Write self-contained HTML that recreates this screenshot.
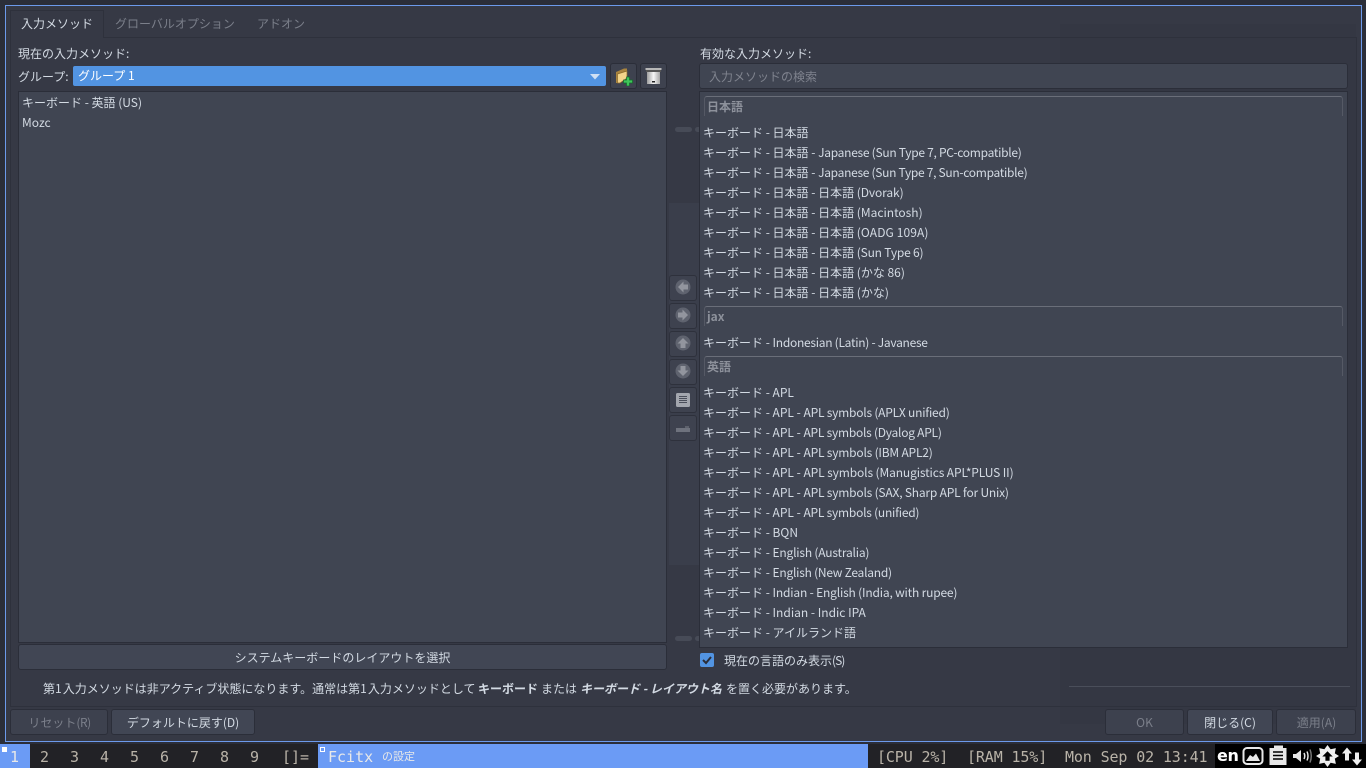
<!DOCTYPE html>
<html lang="ja"><head><meta charset="utf-8"><title>Fcitx の設定</title>
<style>
html,body{margin:0;padding:0;width:1366px;height:768px;overflow:hidden;background:#2b2e39}
body{position:relative;font:12px/16px "Noto Sans CJK JP","Liberation Sans",sans-serif;color:#d3dae3}
div,span,svg{position:absolute;box-sizing:border-box}
em{font-style:normal}
.t{white-space:nowrap;line-height:16px}
.r{left:703px;white-space:nowrap;line-height:16px}
.box{background:#404552;border:1px solid #2b2e39}
.btn{background:#414654;border:1px solid #2b2e39;border-radius:3px;text-align:center;white-space:nowrap;line-height:24px;padding-top:1px}
.dis{background:#3d414e;color:#7b7f8a}
.sec{left:704px;width:639px;height:20px;border:1px solid #6a6e79;border-bottom:0;border-radius:3px 3px 0 0;border-right-color:#555965;border-left-color:#555965}
.sh{left:707px;font-weight:bold;color:#8d919b;white-space:nowrap;line-height:16px}
.side{left:669px;width:28px;height:26px;background:#3e424f;border:1px solid #2e313c;border-radius:3px}
.m{font:15px/24px "DejaVu Sans Mono",monospace;color:#b9b3a8;white-space:pre;top:745px}
.ms{letter-spacing:-.13px}
.ic{top:744px;height:24px;background:#000}
</style></head><body>
<div style="left:5px;top:5px;width:1357px;height:737px;background:#363945;border:1px solid #6c9aec"></div>
<div style="left:1060px;top:24px;width:296px;height:700px;background:#343743"></div>
<div style="left:669px;top:203px;width:30px;height:362px;background:#3a3e4b"></div>
<div style="left:10px;top:37px;width:1347px;height:670px;border:1px solid #2e313c"></div>
<div style="left:10px;top:10px;width:94px;height:28px;background:#363945;border:1px solid #2e313c;border-bottom:0"></div>
<div class="t" style="left:21px;top:16px">入力メソッド</div>
<div class="t" style="left:115px;top:16px;color:#7b7f8a">グローバルオプション</div>
<div class="t" style="left:257px;top:16px;color:#7b7f8a">アドオン</div>

<div class="t" style="left:18px;top:46px">現在の入力メソッド:</div>
<div class="t" style="left:18px;top:69px">グループ:</div>
<div style="left:73px;top:66px;width:533px;height:20px;background:#5294e2;border-radius:2px"></div>
<div class="t" style="left:78px;top:68px;color:#fff">グループ 1</div>
<svg style="left:589px;top:74px" width="12" height="6"><path d="M1 0H11L6 5.500Z" fill="#cfe0f4"/></svg>
<div class="btn" style="left:610px;top:63px;width:27px;height:26px;background:#3e424f"></div>
<svg style="left:614px;top:66px" width="20" height="20" viewBox="0 0 20 20"><path d="M2 6L10 2.500L13 2.500V12L3 17H2Z" fill="#a9843f"/><path d="M3.500 8L13 5V12L6 17H3.500Z" fill="#f3d48a" stroke="#8a6a2a" stroke-width=".7"/><path d="M12.500 11h3v3h3v3h-3v3h-3v-3h-3v-3h3z" fill="#3fc65a" stroke="#146b2b" stroke-width=".7"/></svg>
<div class="btn" style="left:640px;top:63px;width:27px;height:26px;background:#3e424f"></div>
<svg style="left:645px;top:67px" width="17" height="18" viewBox="0 0 17 18"><defs><linearGradient id="tr" x1="0" x2="1" y1="0" y2="0"><stop offset="0" stop-color="#9d9d9d"/><stop offset=".5" stop-color="#f6f6f6"/><stop offset="1" stop-color="#a5a5a5"/></linearGradient></defs><rect x=".5" y="1" width="16" height="2" fill="#b8b8b8"/><rect x="1" y="3" width="15" height="2" fill="#555"/><path d="M2 5H15V17H2Z" fill="url(#tr)"/><rect x="7" y="14" width="3" height="1.500" fill="#222"/></svg>

<div class="box" style="left:18px;top:91px;width:649px;height:552px"></div>
<div class="t" style="left:22px;top:95px">キーボード - 英語 (US)</div>
<div class="t" style="left:22px;top:115px">Mozc</div>
<div class="btn" style="left:18px;top:644px;width:649px;height:26px">システムキーボードのレイアウトを選択</div>

<div style="left:675px;top:127px;width:17px;height:5px;background:#474b57;border-radius:3px"></div>
<div style="left:695px;top:127px;width:4px;height:5px;background:#474b57;border-radius:3px 0 0 3px"></div>
<div style="left:675px;top:636px;width:17px;height:5px;background:#474b57;border-radius:3px"></div>
<div style="left:695px;top:636px;width:4px;height:5px;background:#474b57;border-radius:3px 0 0 3px"></div>

<div class="side" style="top:275px"></div>
<svg style="left:674px;top:278px" width="18" height="18" viewBox="0 0 18 18"><circle cx="9" cy="9" r="7.500" fill="#5f636f"/><path d="M9.500 3.500L4 9L9.500 14.500V11.500H14V6.500H9.500Z" fill="#92959e"/></svg>
<div class="side" style="top:303px"></div>
<svg style="left:674px;top:306px" width="18" height="18" viewBox="0 0 18 18"><circle cx="9" cy="9" r="7.500" fill="#5f636f"/><path d="M8.500 3.500L14 9L8.500 14.500V11.500H4V6.500H8.500Z" fill="#92959e"/></svg>
<div class="side" style="top:331px"></div>
<svg style="left:674px;top:334px" width="18" height="18" viewBox="0 0 18 18"><circle cx="9" cy="9" r="7.500" fill="#5f636f"/><path d="M3.500 9.500L9 4L14.500 9.500H11.500V14H6.500V9.500Z" fill="#92959e"/></svg>
<div class="side" style="top:359px"></div>
<svg style="left:674px;top:362px" width="18" height="18" viewBox="0 0 18 18"><circle cx="9" cy="9" r="7.500" fill="#5f636f"/><path d="M3.500 8.500L9 14L14.500 8.500H11.500V4H6.500V8.500Z" fill="#92959e"/></svg>
<div class="side" style="top:387px"></div>
<svg style="left:675px;top:392px" width="16" height="16" viewBox="0 0 16 16"><rect x="1" y="1" width="14" height="14" rx="1.500" fill="#a3a6ae"/><path d="M4 4.500H12M4 6.500H12M4 8.500H12M4 10.500H12" stroke="#4a4e5a" stroke-width="1"/></svg>
<div class="side" style="top:415px"></div>
<svg style="left:675px;top:424px" width="16" height="9" viewBox="0 0 16 9"><path d="M1 4H15V8H1Z" fill="#6e727d"/><path d="M10 2H14V4H10Z" fill="#5d616c"/></svg>

<div class="t" style="left:700px;top:46px">有効な入力メソッド:</div>
<div class="btn" style="left:699px;top:63px;width:649px;height:26px;background:#404552"></div>
<div class="t" style="left:709px;top:69px;color:#7f838e">入力メソッドの検索</div>
<div class="box" style="left:699px;top:91px;width:649px;height:557px"></div>

<div class="sec" style="top:96px"></div><div class="sh" style="top:99px">日本語</div>
<div class="r" style="top:125px">キーボード - 日本語</div>
<div class="r" style="top:145px">キーボード - 日本語 - <em style="letter-spacing:-.28px">Japanese (Sun Type 7, PC-compatible)</em></div>
<div class="r" style="top:165px">キーボード - 日本語 - <em style="letter-spacing:-.3px">Japanese (Sun Type 7, Sun-compatible)</em></div>
<div class="r" style="top:185px">キーボード - 日本語 - 日本語 <em style="letter-spacing:-.1px">(Dvorak)</em></div>
<div class="r" style="top:205px">キーボード - 日本語 - 日本語 (Macintosh)</div>
<div class="r" style="top:225px">キーボード - 日本語 - 日本語 <em style="letter-spacing:.1px">(OADG 109A)</em></div>
<div class="r" style="top:245px">キーボード - 日本語 - 日本語 <em style="letter-spacing:-.2px">(Sun Type 6)</em></div>
<div class="r" style="top:265px">キーボード - 日本語 - 日本語 (かな 86)</div>
<div class="r" style="top:285px">キーボード - 日本語 - 日本語 (かな)</div>
<div class="sec" style="top:306px"></div><div class="sh" style="top:309px">jax</div>
<div class="r" style="top:335px">キーボード - <em style="letter-spacing:-.28px">Indonesian (Latin) - Javanese</em></div>
<div class="sec" style="top:356px"></div><div class="sh" style="top:359px">英語</div>
<div class="r" style="top:385px">キーボード - APL</div>
<div class="r" style="top:405px">キーボード - APL - <em style="letter-spacing:-.22px">APL symbols (APLX unified)</em></div>
<div class="r" style="top:425px">キーボード - APL - <em style="letter-spacing:-.25px">APL symbols (Dyalog APL)</em></div>
<div class="r" style="top:445px">キーボード - APL - <em style="letter-spacing:-.2px">APL symbols (IBM APL2)</em></div>
<div class="r" style="top:465px">キーボード - APL - <em style="letter-spacing:-.12px">APL symbols (Manugistics APL*PLUS II)</em></div>
<div class="r" style="top:485px">キーボード - APL - <em style="letter-spacing:-.2px">APL symbols (SAX, Sharp APL for Unix)</em></div>
<div class="r" style="top:505px">キーボード - APL - <em style="letter-spacing:-.24px">APL symbols (unified)</em></div>
<div class="r" style="top:525px">キーボード - BQN</div>
<div class="r" style="top:545px">キーボード - <em style="letter-spacing:-.2px">English (Australia)</em></div>
<div class="r" style="top:565px">キーボード - <em style="letter-spacing:-.24px">English (New Zealand)</em></div>
<div class="r" style="top:585px">キーボード - <em style="letter-spacing:-.18px">Indian - English (India, with rupee)</em></div>
<div class="r" style="top:605px">キーボード - Indian - Indic IPA</div>
<div class="r" style="top:625px">キーボード - アイルランド語</div>

<div style="left:700px;top:653px;width:14px;height:14px;background:#5294e2;border-radius:2px"></div>
<svg style="left:700px;top:653px" width="14" height="14"><path d="M3 7L6 10L11 4" fill="none" stroke="#2b2e39" stroke-width="2"/></svg>
<div class="t" style="left:724px;top:653px">現在の言語のみ表示<em style="letter-spacing:-1px">(S)</em></div>
<div class="t" style="left:43px;top:681px">第<em style="letter-spacing:1px">1</em>入力メソッドは非アクティブ状態になります。通常は第<em style="letter-spacing:1px">1</em>入力メソッドとして</div>
<div class="t" style="left:478px;top:681px"><b>キーボード</b></div>
<div class="t" style="left:541px;top:681px">または</div>
<div class="t" style="left:580px;top:681px"><b><i>キーボード - レイアウト名</i></b></div>
<div class="t" style="left:726px;top:681px">を置く必要があります。</div>
<div style="left:1069px;top:686px;width:281px;height:1px;background:#4a4e5a"></div>

<div class="btn dis" style="left:10px;top:709px;width:98px;height:26px;padding-left:1px">リセット<em style="letter-spacing:-.5px">(R)</em></div>
<div class="btn" style="left:111px;top:709px;width:144px;height:26px">デフォルトに戻す(D)</div>
<div class="btn dis" style="left:1105px;top:709px;width:79px;height:26px">OK</div>
<div class="btn" style="left:1187px;top:709px;width:86px;height:26px">閉じる(C)</div>
<div class="btn dis" style="left:1276px;top:709px;width:80px;height:26px;padding-left:1px">適用(A)</div>

<div style="left:0;top:744px;width:1366px;height:24px;background:#222226"></div>
<div style="left:0;top:744px;width:30px;height:24px;background:#6b9bf5"></div>
<div style="left:2px;top:747px;width:5px;height:5px;background:#fff"></div>
<div class="m" style="left:10px;color:#e8e8e8">1</div>
<div class="m" style="left:40px">2</div><div class="m" style="left:70px">3</div><div class="m" style="left:100px">4</div><div class="m" style="left:130px">5</div><div class="m" style="left:160px">6</div><div class="m" style="left:190px">7</div><div class="m" style="left:220px">8</div><div class="m" style="left:250px">9</div>
<div class="m" style="left:282px">[]=</div>
<div style="left:318px;top:744px;width:550px;height:24px;background:#6b9bf5"></div>
<div style="left:320px;top:747px;width:5px;height:5px;border:1px solid #fff"></div>
<div class="m" style="left:328px;color:#e8e8e8">Fcitx</div>
<div class="t" style="left:382px;top:748px;color:#e8e8e8;font-size:11px">の設定</div>
<div class="m ms" style="left:877px">[CPU 2%]</div>
<div class="m ms" style="left:967px">[RAM 15%]</div>
<div class="m ms" style="left:1065px">Mon Sep 02 13:41</div>

<div class="ic" style="left:1215px;width:151px"></div>
<div style="left:1217px;top:744px;font:bold 16px/24px 'DejaVu Sans',sans-serif;color:#fff;letter-spacing:-.4px">en</div>
<svg style="left:1242px;top:746px" width="22" height="20" viewBox="0 0 22 20"><rect x="1.500" y="2" width="19" height="16" rx="3.500" fill="none" stroke="#e8e8e8" stroke-width="2"/><path d="M4 15L8 9L11 11L14 7.500L18 15Z" fill="#e8e8e8"/></svg>
<svg style="left:1268px;top:745px" width="20" height="21" viewBox="0 0 20 21"><path d="M1.500 3H18.500V20H1.500Z" fill="#e8e8e8"/><rect x="6" y="0.500" width="9" height="4" fill="#e8e8e8"/><path d="M5 7H15M5 10.500H15M5 14H15" stroke="#000" stroke-width="1.600"/></svg>
<svg style="left:1292px;top:747px" width="21" height="18" viewBox="0 0 21 18"><path d="M1 7H4L9 3V15L4 11H1Z" fill="#e8e8e8"/><path d="M12 6Q13.500 9 12 12M15 4.500Q17 9 15 13.500" fill="none" stroke="#e8e8e8" stroke-width="1.500"/><path d="M18 2.500Q20.500 9 18 15.500" fill="none" stroke="#777" stroke-width="1.500"/></svg>
<svg style="left:1316px;top:745px" width="23" height="22" viewBox="0 0 22 21"><path d="M11 0L14 4L19 3L18 8L22 10.500L18 13L19 18L14 17L11 21L8 17L3 18L4 13L0 10.500L4 8L3 3L8 4Z" fill="#f0f0f0"/><path d="M11 6L16 11H13V15H9V11H6Z" fill="#000"/></svg>
<svg style="left:1342px;top:747px" width="20" height="19" viewBox="0 0 20 18"><path d="M5 0L10 6H7V13H3V6H0Z" fill="#f0f0f0"/><path d="M15 18L20 12H17V5H13V12H10Z" fill="#f0f0f0"/></svg>
</body></html>
